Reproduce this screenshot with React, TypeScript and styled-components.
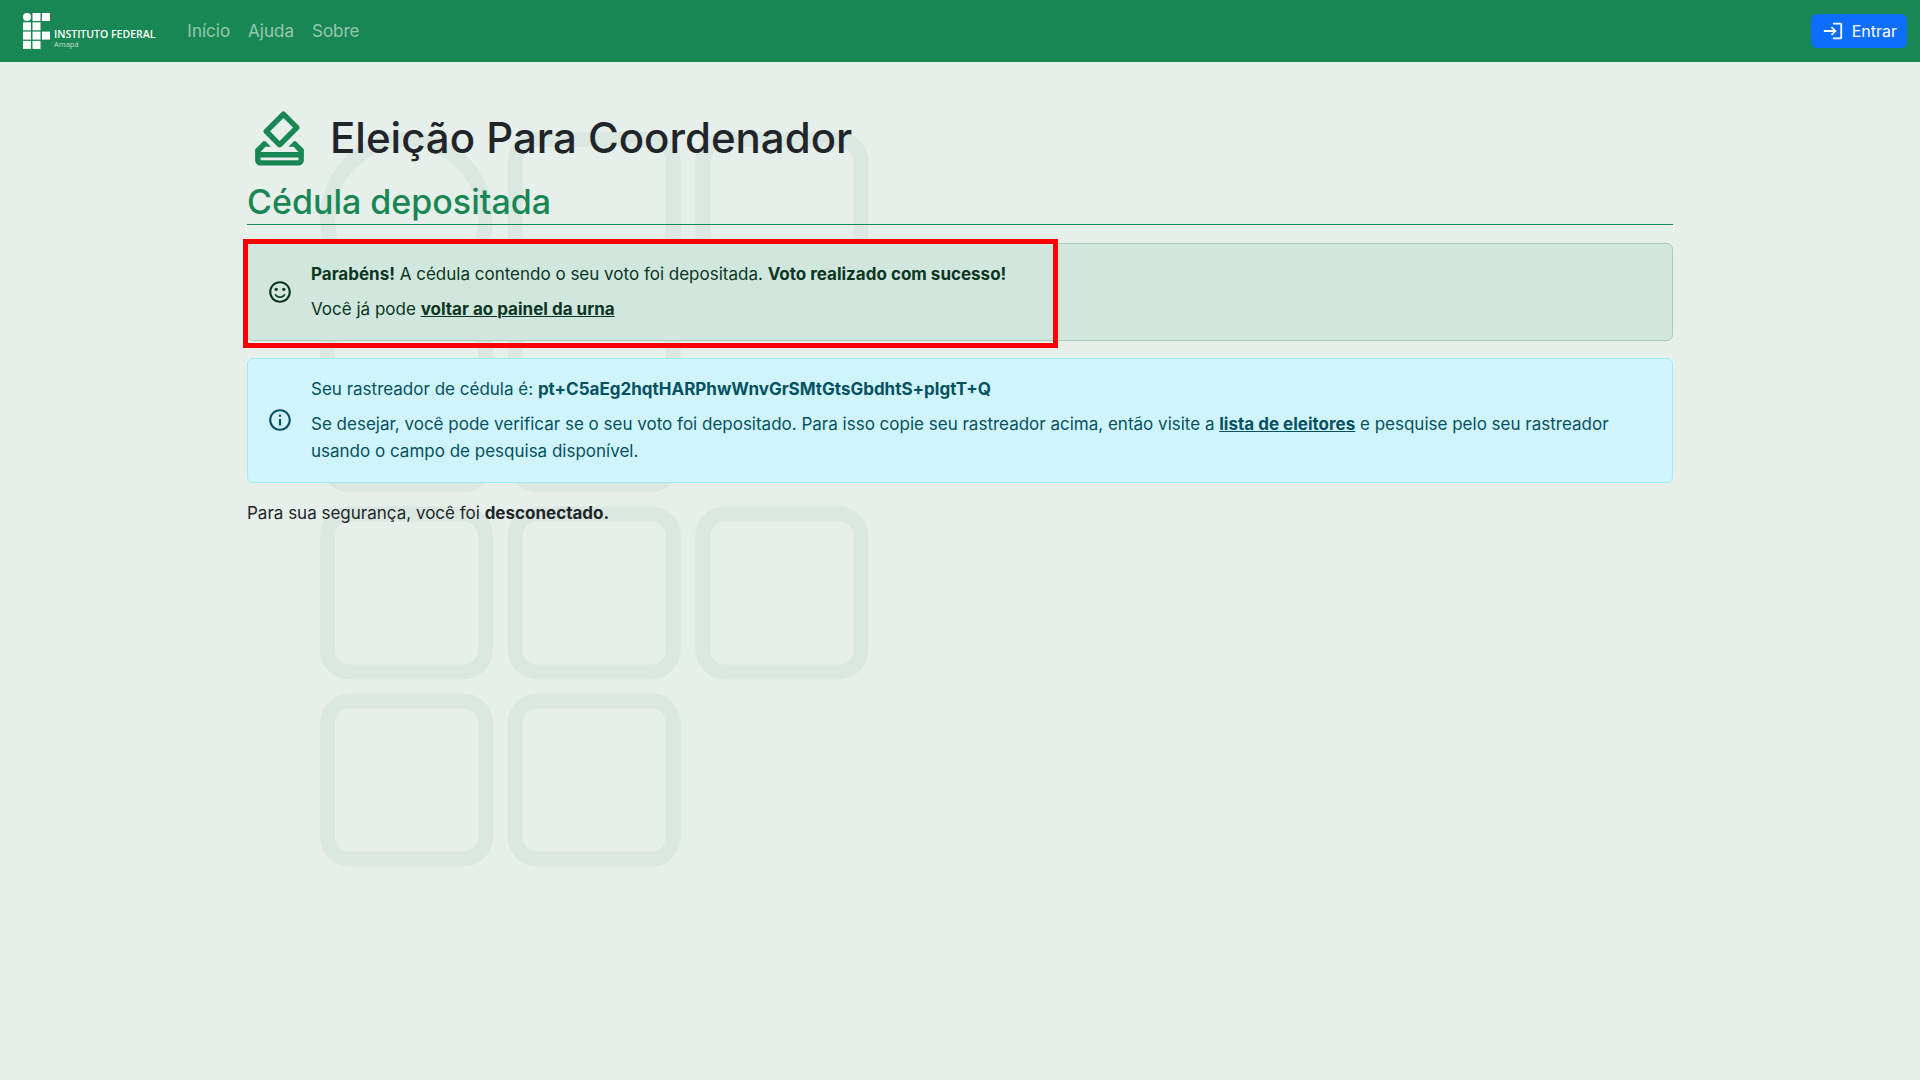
import React from "react"
import styled, { createGlobalStyle } from "styled-components"
import {
  MdOutlineHowToVote,
  MdOutlineInfo,
  MdOutlineLogin,
  MdOutlineSentimentSatisfied,
} from "react-icons/md"

const GlobalStyle = createGlobalStyle`
  html, body {
    margin: 0;
    padding: 0;
    background: #e6efea;
  }
  body {
    font-family: Inter, "Liberation Sans", sans-serif;
    font-size: 16px;
    color: #212529;
  }
  * {
    box-sizing: border-box;
  }
`

const logoCells = [
  [0, 1, 1],
  [1, 1, 0],
  [1, 1, 1],
  [1, 1, 0],
]

const IfMark = () => (
  <LogoSvg viewBox="0 0 28 36" aria-hidden>
    <circle cx="4" cy="4" r="4" fill="#fff" />
    {logoCells.map((row, r) =>
      row.map((on, c) =>
        on ? (
          <rect key={`${r}-${c}`} x={c * 9.5} y={r * 9.3} width="8" height="8" fill="#fff" />
        ) : null
      )
    )}
  </LogoSvg>
)

const watermarkTiles = [
  [1, 0],
  [2, 0],
  [0, 1],
  [1, 1],
  [0, 2],
  [1, 2],
  [2, 2],
  [0, 3],
  [1, 3],
]

const Watermark = () => (
  <WatermarkSvg viewBox="0 0 550 748" aria-hidden>
    <circle cx="86.5" cy="86.5" r="79" fill="none" stroke="#dbe8e1" strokeWidth="15" />
    {watermarkTiles.map(([c, r]) => (
      <rect
        key={`${c}-${r}`}
        x={c * 187.7 + 7.5}
        y={r * 187.2 + 7.5}
        width="158"
        height="158"
        rx="22"
        fill="none"
        stroke="#dbe8e1"
        strokeWidth="15"
      />
    ))}
  </WatermarkSvg>
)

const App: React.FC = () => {
  return (
    <Page>
      <GlobalStyle />
      <Watermark />
      <Navbar>
        <Brand>
          <IfMark />
          <BrandText>
            <BrandName>INSTITUTO FEDERAL</BrandName>
            <BrandCampus>Amapá</BrandCampus>
          </BrandText>
        </Brand>
        <NavLinks>
          <NavLink href="#">Início</NavLink>
          <NavLink href="#">Ajuda</NavLink>
          <NavLink href="#">Sobre</NavLink>
        </NavLinks>
        <LoginButton>
          <MdOutlineLogin size={22} />
          Entrar
        </LoginButton>
      </Navbar>
      <Main>
        <TitleRow>
          <MdOutlineHowToVote size={65} color="#198754" />
          <Title>Eleição Para Coordenador</Title>
        </TitleRow>
        <SubTitle>Cédula depositada</SubTitle>
        <Alert $variant="success">
          <Highlight />
          <MdOutlineSentimentSatisfied size={26} />
          <AlertBody>
            <AlertLine>
              <strong>Parabéns!</strong> A cédula contendo o seu voto foi depositada.{" "}
              <strong>Voto realizado com sucesso!</strong>
            </AlertLine>
            <AlertLine>
              Você já pode <AlertLink href="#">voltar ao painel da urna</AlertLink>
            </AlertLine>
          </AlertBody>
        </Alert>
        <Alert $variant="info">
          <MdOutlineInfo size={26} />
          <AlertBody>
            <AlertLine>
              Seu rastreador de cédula é: <strong>pt+C5aEg2hqtHARPhwWnvGrSMtGtsGbdhtS+plgtT+Q</strong>
            </AlertLine>
            <AlertLine>
              Se desejar, você pode verificar se o seu voto foi depositado. Para isso copie seu
              rastreador acima, então visite a <AlertLink href="#">lista de eleitores</AlertLink> e
              pesquise pelo seu rastreador usando o campo de pesquisa disponível.
            </AlertLine>
          </AlertBody>
        </Alert>
        <Notice>
          Para sua segurança, você foi <strong>desconectado.</strong>
        </Notice>
      </Main>
    </Page>
  )
}

export default App

const Page = styled.div`
  position: relative;
  min-height: 1080px;
  overflow: hidden;
`

const WatermarkSvg = styled.svg`
  position: absolute;
  left: 320px;
  top: 132px;
  width: 550px;
  height: 748px;
`

const Navbar = styled.nav`
  position: relative;
  display: flex;
  align-items: center;
  height: 62px;
  padding: 0 13px 0 23px;
  background: #198754;
`

const Brand = styled.div`
  display: flex;
  align-items: flex-end;
  gap: 3px;
  margin-right: 32px;
`

const LogoSvg = styled.svg`
  display: block;
  width: 28px;
  height: 36px;
`

const BrandText = styled.div`
  display: flex;
  flex-direction: column;
  color: #fff;
  font-family: "Open Sans", sans-serif;
`

const BrandName = styled.span`
  font-size: 10.5px;
  font-weight: 600;
  line-height: 12px;
  white-space: nowrap;
`

const BrandCampus = styled.span`
  font-size: 7.5px;
  line-height: 9px;
  opacity: 0.7;
`

const NavLinks = styled.div`
  display: flex;
  gap: 18px;
  flex: 1;
`

const NavLink = styled.a`
  font-size: 17px;
  color: rgba(255, 255, 255, 0.55);
  text-decoration: none;
`

const LoginButton = styled.button`
  display: flex;
  align-items: center;
  gap: 8px;
  height: 34px;
  padding: 0 10px 0 11px;
  border: 0;
  border-radius: 6px;
  background: #0d6efd;
  color: #fff;
  font-family: inherit;
  font-size: 16px;
`

const Main = styled.main`
  position: relative;
  width: 1426px;
  margin: 0 auto;
  padding-top: 44px;
`

const TitleRow = styled.div`
  display: flex;
  align-items: center;
  gap: 18px;
  height: 65px;
`

const Title = styled.h1`
  margin: 0;
  font-size: 42px;
  font-weight: 500;
  line-height: 1.2;
`

const SubTitle = styled.h2`
  margin: 11px 0 18px;
  padding-bottom: 1px;
  border-bottom: 1px solid #198754;
  color: #198754;
  font-size: 34px;
  font-weight: 500;
  line-height: 1.2;
`

const variants = {
  success: { bg: "#d1e7dd", border: "#a3cfbb", text: "#0a3622" },
  info: { bg: "#cff4fc", border: "#9eeaf9", text: "#055160" },
}

const Alert = styled.div<{ $variant: "success" | "info" }>`
  position: relative;
  display: flex;
  align-items: center;
  gap: 18px;
  margin-bottom: 17px;
  padding: 17px 19px 17px 19px;
  border: 1px solid ${props => variants[props.$variant].border};
  border-radius: 6px;
  background: ${props => variants[props.$variant].bg};
  color: ${props => variants[props.$variant].text};

  svg {
    flex: none;
  }
`

const Highlight = styled.div`
  position: absolute;
  left: -5px;
  top: -5px;
  width: 815px;
  height: 109px;
  border: 5px solid #ff0000;
`

const AlertBody = styled.div`
  display: flex;
  flex-direction: column;
  gap: 8px;
`

const AlertLine = styled.p`
  margin: 0;
  font-size: 17px;
  line-height: 27px;
`

const AlertLink = styled.a`
  color: inherit;
  font-weight: 700;
`

const Notice = styled.p`
  margin: 0;
  font-size: 17px;
  line-height: 27px;
`
